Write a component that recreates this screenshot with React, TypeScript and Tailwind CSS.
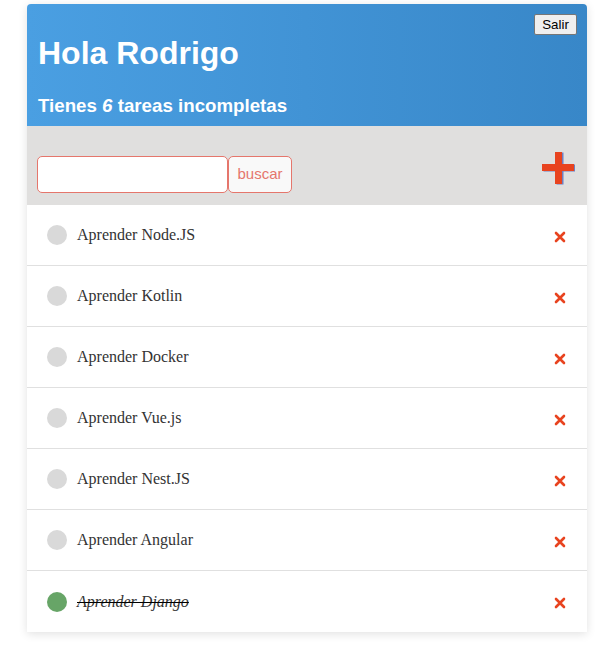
import React from 'react'

const todos = [
  { text: 'Aprender Node.JS', done: false },
  { text: 'Aprender Kotlin', done: false },
  { text: 'Aprender Docker', done: false },
  { text: 'Aprender Vue.js', done: false },
  { text: 'Aprender Nest.JS', done: false },
  { text: 'Aprender Angular', done: false },
  { text: 'Aprender Django', done: true },
]

export default function App() {
  const pending = todos.filter((t) => !t.done).length

  return (
    <div className="min-h-screen bg-white pt-1 pl-[27px]" style={{ fontFamily: '"Liberation Sans", Arial, sans-serif' }}>
      <div className="w-[560px] bg-white shadow-[0_2px_10px_rgba(0,0,0,0.12)] rounded-t-[4px]">
        <header className="relative h-[122px] rounded-t-[4px] bg-gradient-to-r from-[#4a9fe2] to-[#3887c8] px-[11px] pt-[31px] text-white">
          <button className="absolute right-[10px] top-[10px] h-[21px] w-[43px] text-[13.33px] leading-none text-black bg-[#efefef] border border-[#767676] rounded-[2px]">
            Salir
          </button>
          <h1 className="text-[32px] font-bold leading-[37px]">Hola Rodrigo</h1>
          <p className="mt-[23px] text-[18.72px] font-bold leading-[21px]">
            Tienes <em>{pending}</em> tareas incompletas
          </p>
        </header>

        <div className="flex h-[79px] items-start justify-between bg-[#e0dfde] pl-[10px] pr-[12px]">
          <div className="mt-[30px] flex">
            <input className="h-[37px] w-[191px] rounded-[5px] border border-[#e5766c] bg-white px-2 outline-none" />
            <button className="h-[37px] w-[64px] rounded-[5px] border border-[#e5766c] bg-[#f9f9f9] text-[15px] text-[#e5766c]">
              buscar
            </button>
          </div>
          <svg className="mt-[25px]" width="34" height="34" viewBox="0 0 34 34">
            <path d="M14 1h7v12h12v7H21v13h-7V20H1v-7h13z" fill="#6d7fc2" transform="translate(1.5 0.5)" />
            <path d="M14 1h7v12h12v7H21v13h-7V20H1v-7h13z" fill="#e8431f" />
          </svg>
        </div>

        <ul>
          {todos.map((t, i) => (
            <li
              key={t.text}
              className={`flex h-[61px] items-center pl-[20px] pr-[21px] ${i < todos.length - 1 ? 'border-b border-[#e0e0e0]' : ''}`}
            >
              <span className={`h-[20px] w-[20px] rounded-full ${t.done ? 'bg-[#67a567]' : 'bg-[#d9d9d9]'}`} />
              <span
                className={`ml-[10px] flex-1 text-[16px] text-[#333] ${t.done ? 'italic line-through decoration-black' : ''}`}
                style={{ fontFamily: '"Liberation Serif", "Times New Roman", serif' }}
              >
                {t.text}
              </span>
              <svg width="12" height="12" viewBox="0 0 12 12" className="mt-[3px]">
                <path d="M2 2l8 8M10 2l-8 8" stroke="#e8431f" strokeWidth="2.6" strokeLinecap="round" />
              </svg>
            </li>
          ))}
        </ul>
      </div>
    </div>
  )
}
